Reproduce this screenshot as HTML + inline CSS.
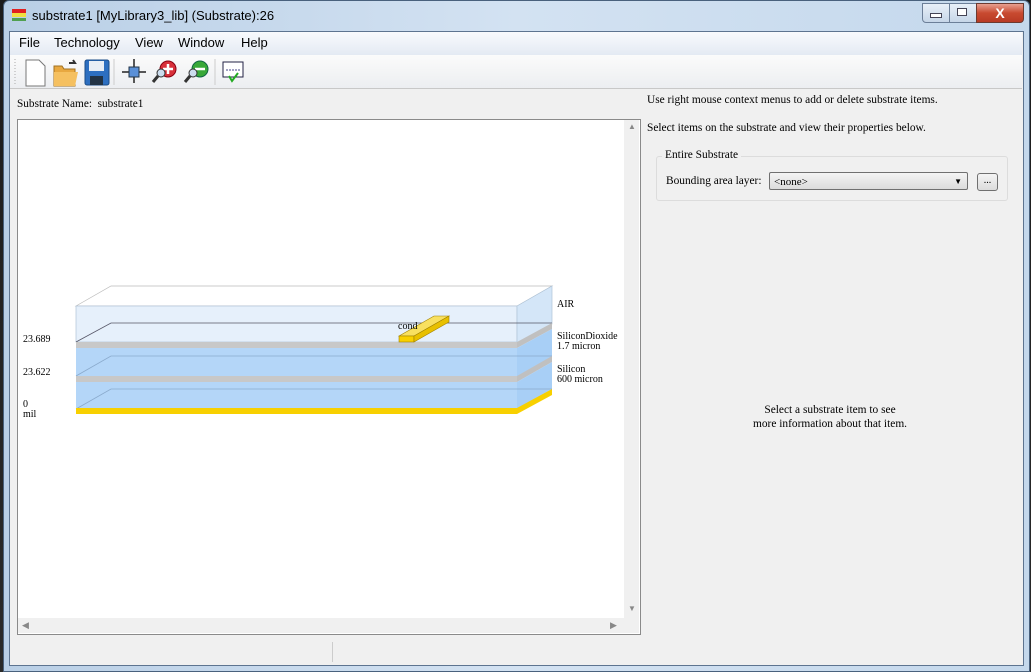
<!DOCTYPE html><html><head><style>
body{margin:0;width:1031px;height:672px;overflow:hidden;background:#6a8fb5;font-family:"Liberation Serif",serif;position:relative}
.abs{position:absolute}
.t{font-family:"Liberation Sans",sans-serif}
</style></head><body>
<div class="abs" style="left:0;top:0;width:1031px;height:672px;background:linear-gradient(#1c1c1c,#2a2a2a)"></div>
<div class="abs" style="left:3px;top:0;width:1025px;height:670px;background:linear-gradient(90deg,#b9cfe6,#d3e2f2 50%,#c4d8ec);border-radius:6px 6px 0 0;border:1px solid #49617d"></div>
<div class="abs" style="left:12px;top:9px;width:14px;height:4px;background:#e02020"></div>
<div class="abs" style="left:12px;top:13px;width:14px;height:4px;background:#f0e040"></div>
<div class="abs" style="left:12px;top:18px;width:14px;height:3px;background:#50a050"></div>
<div class="abs t" style="left:32px;top:8px;font-size:13px;color:#000">substrate1 [MyLibrary3_lib] (Substrate):26</div>
<div class="abs" style="left:922px;top:3px;width:26px;height:18px;border:1px solid #6c7f98;border-radius:0 0 0 4px;background:linear-gradient(#e8f0f8,#c6d6e8)"></div>
<div class="abs" style="left:930px;top:13px;width:10px;height:3px;background:#fff;border:1px solid #445"></div>
<div class="abs" style="left:949px;top:3px;width:26px;height:18px;border:1px solid #6c7f98;background:linear-gradient(#e8f0f8,#c6d6e8)"></div>
<div class="abs" style="left:957px;top:8px;width:8px;height:6px;border:1px solid #445;background:#fff"></div>
<div class="abs t" style="left:976px;top:3px;width:46px;height:18px;border:1px solid #6c3a30;border-radius:0 0 4px 0;background:linear-gradient(#e8a090,#c84a30 50%,#b83a24);color:#fff;font-weight:bold;font-size:14px;text-align:center;line-height:18px">X</div>
<div class="abs" style="left:9px;top:31px;width:1013px;height:633px;background:#f0f0f0;border:1px solid #5d7490"></div>
<div class="abs" style="left:10px;top:32px;width:1012px;height:23px;background:linear-gradient(#f8fafd,#e4eaf3)"></div>
<div class="abs t" style="left:19px;top:35px;font-size:13px;word-spacing:0">File</div>
<div class="abs t" style="left:54px;top:35px;font-size:13px">Technology</div>
<div class="abs t" style="left:135px;top:35px;font-size:13px">View</div>
<div class="abs t" style="left:178px;top:35px;font-size:13px">Window</div>
<div class="abs t" style="left:241px;top:35px;font-size:13px">Help</div>
<div class="abs" style="left:10px;top:55px;width:1012px;height:33px;background:linear-gradient(#fbfbfb,#eceef1);border-bottom:1px solid #c8c8c8"></div>
<svg class="abs" style="left:10px;top:55px" width="240" height="33">
<line x1="5" y1="4" x2="5" y2="30" stroke="#aaa" stroke-dasharray="1 2"/>
<path d="M16 5h13l6 6v20H16z" fill="#fff" stroke="#777"/>
<path d="M44 11h8l2 3h11v17H44z" fill="#e8a840" stroke="#a07020"/><path d="M44 17h24l-3 14H44z" fill="#f5c060"/>
<path d="M59 8l6 0-2-3" stroke="#333" fill="none" stroke-width="2"/>
<rect x="75" y="5" width="24" height="25" rx="2" fill="#2d6fc0" stroke="#1a4c88"/><rect x="79" y="6" width="15" height="10" fill="#e8eef5"/><rect x="80" y="21" width="13" height="9" fill="#234"/>
<line x1="104" y1="4" x2="104" y2="30" stroke="#ccc"/>
<path d="M124 4v24M112 17h24" stroke="#222" stroke-width="1.5"/><rect x="119" y="12" width="10" height="10" fill="#5a90d8" stroke="#234"/>
<circle cx="158" cy="14" r="8" fill="#d8303a" stroke="#801"/><path d="M158 9v10M153 14h10" stroke="#fff" stroke-width="2.5"/><path d="M148 21l-5 6" stroke="#333" stroke-width="3"/><circle cx="151" cy="18" r="4" fill="#cde" stroke="#333"/>
<circle cx="190" cy="14" r="8" fill="#38a838" stroke="#164"/><path d="M185 14h10" stroke="#fff" stroke-width="2.5"/><path d="M180 21l-5 6" stroke="#333" stroke-width="3"/><circle cx="183" cy="18" r="4" fill="#cde" stroke="#333"/>
<line x1="205" y1="4" x2="205" y2="30" stroke="#ccc"/>
<rect x="213" y="7" width="20" height="15" fill="#fff" stroke="#224"/><path d="M216 15h14" stroke="#448" stroke-dasharray="2 1"/><path d="M219 21l3 5 6-8" stroke="#2a2" stroke-width="2" fill="none"/>
</svg>
<div class="abs" style="left:17px;top:98px;font-size:11.3px">Substrate Name:&nbsp; substrate1</div>
<div class="abs" style="left:17px;top:119px;width:622px;height:514px;background:#fff;border:1px solid #8a8a8a"></div>
<div class="abs" style="left:624px;top:120px;width:15px;height:498px;background:#f0f0f0"></div>
<div class="abs" style="left:18px;top:618px;width:621px;height:15px;background:#f0f0f0"></div>
<div class="abs" style="left:628px;top:122px;font-size:8px;color:#888">▲</div>
<div class="abs" style="left:628px;top:604px;font-size:8px;color:#888">▼</div>
<div class="abs" style="left:22px;top:620px;font-size:9px;color:#888">◀</div>
<div class="abs" style="left:610px;top:620px;font-size:9px;color:#888">▶</div>
<svg class="abs" style="left:0;top:0" width="640" height="640">
<path d="M76 306L111 286H552L517 306Z" fill="#fff" stroke="#bbb" stroke-width=".7"/>
<rect x="76" y="306" width="441" height="36" fill="#e6f0fb" stroke="#b0c4d8" stroke-width=".7"/>
<path d="M517 306L552 286V324L517 343Z" fill="#d4e6f8" stroke="#b0c4d8" stroke-width=".7"/>
<path d="M76 342L111 323H552" fill="none" stroke="#556" stroke-width=".8"/>
<rect x="76" y="342" width="441" height="6" fill="#c8c8c8"/>
<path d="M517 342L552 323V329L517 348Z" fill="#c0c0c0"/>
<rect x="76" y="348" width="441" height="28" fill="#b4d6f8"/>
<path d="M517 348L552 329V361L517 381Z" fill="#a8cff6"/>
<path d="M76 376L111 356H552" fill="none" stroke="#8aaacc" stroke-width=".8"/>
<rect x="76" y="376" width="441" height="6" fill="#c8c8c8"/>
<path d="M517 376L552 356V362L517 382Z" fill="#c0c0c0"/>
<rect x="76" y="382" width="441" height="27" fill="#b4d6f8"/>
<path d="M517 382L552 362V389L517 409Z" fill="#a8cff6"/>
<path d="M76 409L111 389H552" fill="none" stroke="#8aaacc" stroke-width=".8"/>
<rect x="76" y="408" width="441" height="6" fill="#f8d000"/>
<path d="M517 408L552 389V395L517 414Z" fill="#f8d000"/>
<path d="M399 336L434 316H449L414 336Z" fill="#f8e060" stroke="#a08000" stroke-width=".6"/>
<rect x="399" y="336" width="15" height="6" fill="#f8d000" stroke="#a08000" stroke-width=".6"/>
<path d="M414 336L449 316V322L414 342Z" fill="#e8c000" stroke="#a08000" stroke-width=".6"/>
</svg>
<div class="abs" style="left:398px;top:321px;font-size:10px">cond</div>
<div class="abs" style="left:557px;top:299px;font-size:10px">AIR</div>
<div class="abs" style="left:557px;top:332px;font-size:10px;line-height:10px">SiliconDioxide<br>1.7 micron</div>
<div class="abs" style="left:557px;top:365px;font-size:10px;line-height:10px">Silicon<br>600 micron</div>
<div class="abs" style="left:23px;top:334px;font-size:10px">23.689</div>
<div class="abs" style="left:23px;top:367px;font-size:10px">23.622</div>
<div class="abs" style="left:23px;top:400px;font-size:10px;line-height:10px">0<br>mil</div>
<div class="abs" style="left:647px;top:94px;font-size:11.4px">Use right mouse context menus to add or delete substrate items.</div>
<div class="abs" style="left:647px;top:122px;font-size:11.4px">Select items on the substrate and view their properties below.</div>
<div class="abs" style="left:656px;top:156px;width:350px;height:43px;border:1px solid #dcdcdc;border-radius:3px"></div>
<div class="abs" style="left:662px;top:149px;font-size:11.4px;background:#f0f0f0;padding:0 3px">Entire Substrate</div>
<div class="abs" style="left:666px;top:175px;font-size:11.4px">Bounding area layer:</div>
<div class="abs" style="left:769px;top:172px;width:199px;height:18px;border:1px solid #707070;border-radius:2px;background:linear-gradient(#f4f4f4,#dcdcdc);font-size:11px;line-height:18px;padding-left:4px;box-sizing:border-box">&lt;none&gt;<span style="position:absolute;right:5px;font-size:8px">▼</span></div>
<div class="abs" style="left:977px;top:173px;width:19px;height:16px;border:1px solid #707070;border-radius:3px;background:linear-gradient(#f4f4f4,#dcdcdc);font-size:10px;text-align:center;line-height:14px">...</div>
<div class="abs" style="left:740px;top:403px;width:180px;text-align:center;font-size:11.4px;line-height:14px">Select a substrate item to see<br>more information about that item.</div>
<div class="abs" style="left:332px;top:642px;width:1px;height:20px;background:#ccc"></div>
</body></html>
